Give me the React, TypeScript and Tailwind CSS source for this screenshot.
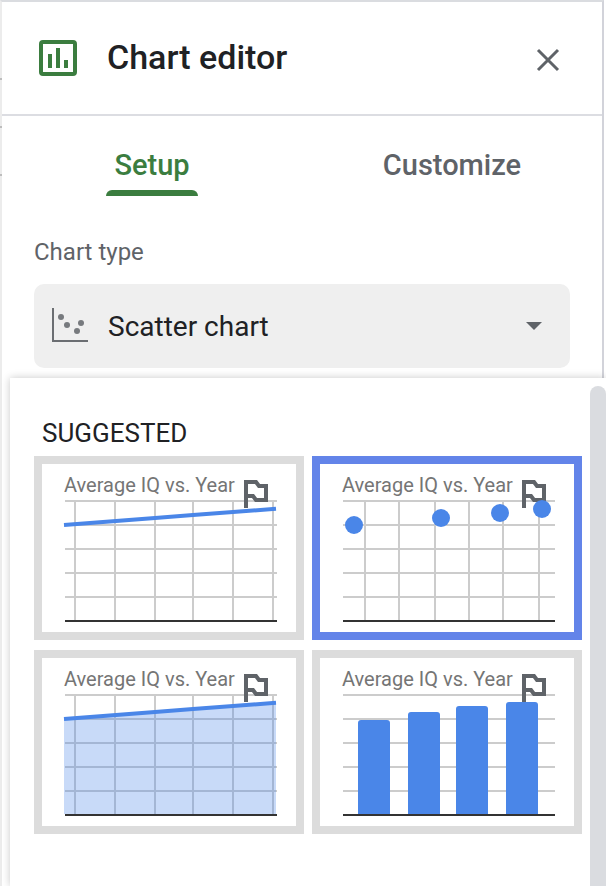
const GRID = "#cccccc";

function Flag() {
  return (
    <path d="M204 9 V-17 H214 L217 -13 H224 V1 H214 L211 -3 H204" fill="none" stroke="#5f6368" strokeWidth="4" strokeLinejoin="miter" />
  );
}

function Grid({ vs, color = GRID }: { vs: number[]; color?: string }) {
  return (
    <g>
      {[2, 26, 50, 74, 98].map((y) => (
        <rect key={y} x={23} y={y - 1} width={212} height={2} fill={color} />
      ))}
      {vs.map((x) => (
        <rect key={x} x={x - 1} y={2} width={2} height={120} fill={color} />
      ))}
    </g>
  );
}

const Baseline = () => <rect x={23} y={121} width={212} height={2} fill="#333333" />;
const LINE = "22,26 113,19 151,16 191,13 234,9.7";

function Card({ selected, children }: { selected?: boolean; children: React.ReactNode }) {
  return (
    <div className={`h-[184px] border-[8px] bg-white ${selected ? "border-[#6384e9]" : "border-[#dcdcdc]"}`}>
      <div className="h-[35px] pl-[22px] pt-[7px] font-['Roboto',sans-serif] text-[20px] leading-[28px] text-[#757575] whitespace-nowrap">
        Average IQ vs. Year
      </div>
      <svg width="254" height="125" viewBox="0 0 254 125" className="block overflow-visible">
        {children}
      </svg>
    </div>
  );
}

const LINE_VS = [33, 73, 113, 151, 191, 231];

export default function App() {
  return (
    <div className="relative h-[886px] w-[606px] overflow-hidden bg-white font-['Roboto',sans-serif]">
      <div className="h-full w-[604px] border-l-2 border-r-2 border-t-2 border-l-[#ececec] border-r-[#d2d3da] border-t-[#dadce0]">
        <header className="flex h-[114px] items-center border-b-2 border-[#dcdde2] pl-[37px] pr-[42px]">
          <svg width="38" height="36" viewBox="0 0 38 36" className="mr-[30px]">
            <rect x="2" y="2" width="34" height="32" rx="2" fill="none" stroke="#3b7d3f" strokeWidth="4" />
            <rect x="9" y="14" width="4" height="14" fill="#3b7d3f" />
            <rect x="17" y="8" width="4" height="20" fill="#3b7d3f" />
            <rect x="25" y="20" width="4" height="8" fill="#3b7d3f" />
          </svg>
          <h1 className="flex-1 text-[34px] font-medium leading-none text-[#202124] -mt-[2px]">Chart editor</h1>
          <svg width="24" height="24" viewBox="0 0 24 24" fill="none" stroke="#5f6368" strokeWidth="3" className="mt-[4px]">
            <path d="M2 2 L22 22 M22 2 L2 22" />
          </svg>
        </header>

        <nav className="flex h-[80px]">
          <div className="relative flex w-[300px] justify-center">
            <span className="mt-[32px] text-[29px] font-medium leading-[34px] text-[#3b7d3f]">Setup</span>
            <span className="absolute bottom-0 left-[104px] h-[6px] w-[92px] rounded-t-[6px] bg-[#3b7d3f]" />
          </div>
          <div className="flex flex-1 justify-center">
            <span className="mt-[32px] text-[29px] font-medium leading-[34px] text-[#5f6368]">Customize</span>
          </div>
        </nav>

        <div className="px-[32px] pt-[40px]">
          <div className="text-[24px] leading-[32px] text-[#5f6368]">Chart type</div>
          <div className="mt-[16px] flex h-[84px] w-[536px] items-center rounded-[10px] bg-[#efefef] pl-[18px] pr-[28px]">
            <svg width="36" height="36" viewBox="0 0 36 36" className="mr-[20px]">
              <path d="M1 0 V33 H36" fill="none" stroke="#6b6e72" strokeWidth="2" />
              <circle cx="9" cy="9" r="3" fill="#777a7e" />
              <circle cx="15" cy="17" r="3" fill="#777a7e" />
              <circle cx="29" cy="15" r="3" fill="#777a7e" />
              <circle cx="25" cy="23" r="3" fill="#777a7e" />
            </svg>
            <span className="flex-1 pt-[2px] text-[28px] leading-none text-[#202124]">Scatter chart</span>
            <svg width="16" height="8" viewBox="0 0 16 8">
              <path d="M0 0 H16 L8 8 Z" fill="#5f6368" />
            </svg>
          </div>
        </div>
      </div>

      <span className="absolute left-0 top-[78px] h-[2px] w-[2px] bg-[#bdbdbd]" />
      <span className="absolute left-0 top-[126px] h-[2px] w-[2px] bg-[#bdbdbd]" />
      <span className="absolute left-0 top-[174px] h-[2px] w-[2px] bg-[#bdbdbd]" />

      <div className="absolute left-[10px] top-[378px] h-[508px] w-[596px] bg-white pl-[24px] shadow-[0_0_8px_rgba(0,0,0,0.22)]">
        <div className="absolute right-0 top-[8px] h-[500px] w-[16px] rounded-t-[8px] bg-[#dadce0]" />
        <div className="pt-[40px] text-[26px] leading-[30px] text-[#202124] pl-[8px]">SUGGESTED</div>
        <div className="mt-[8px] grid w-[548px] grid-cols-2 gap-x-[8px] gap-y-[10px]">
          <Card>
            <Grid vs={LINE_VS} />
            <Flag />
            <Baseline />
            <polyline points={LINE} fill="none" stroke="#4a86e8" strokeWidth="4" />
          </Card>
          <Card selected>
            <Grid vs={[45, 79, 115, 149, 183, 219]} />
            <Flag />
            <Baseline />
            <g fill="#4a86e8">
              <circle cx="34" cy="26" r="9" />
              <circle cx="121" cy="19" r="9" />
              <circle cx="180" cy="14" r="9" />
              <circle cx="222" cy="10" r="9" />
            </g>
          </Card>
          <Card>
            <Grid vs={LINE_VS} />
            <Flag />
            <polygon points={`22,121 ${LINE} 234,121`} fill="#4a86e8" fillOpacity="0.3" />
            <Baseline />
            <polyline points={LINE} fill="none" stroke="#4a86e8" strokeWidth="4" />
          </Card>
          <Card>
            <Grid vs={[]} />
            <Flag />
            <Baseline />
            <g fill="#4a86e8">
              <path d="M38 121 V30 Q38 27 41 27 H67 Q70 27 70 30 V121 Z" />
              <path d="M88 121 V22 Q88 19 91 19 H117 Q120 19 120 22 V121 Z" />
              <path d="M136 121 V16 Q136 13 139 13 H165 Q168 13 168 16 V121 Z" />
              <path d="M186 121 V12 Q186 9 189 9 H215 Q218 9 218 12 V121 Z" />
            </g>
          </Card>
        </div>
      </div>
    </div>
  );
}
